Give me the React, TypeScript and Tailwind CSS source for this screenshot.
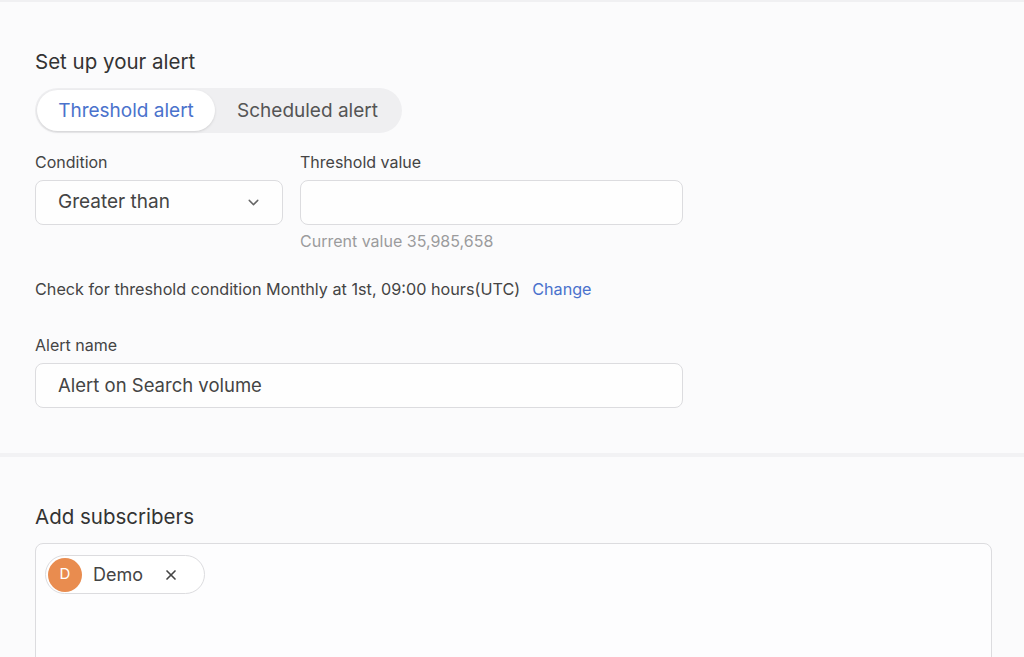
import { ChevronDown, X } from "lucide-react";

export default function App() {
  return (
    <div
      className="h-[657px] w-[1024px] overflow-hidden bg-[#fbfbfc] text-[#3a3a3c]"
      style={{ fontFamily: "Inter, 'Noto Sans', sans-serif" }}
    >
      <div className="h-[2px] bg-[#f0f0f2]" />

      {/* Alert setup */}
      <section className="pl-[35px] pt-[46px] pb-[45px]">
        <h2 className="text-[20.5px] leading-[28px] text-[#333]">Set up your alert</h2>

        <div className="mt-3 flex w-[367px] h-[45px] items-center rounded-full bg-[#efeff1] p-[2px]">
          <button className="h-[41px] w-[178px] rounded-full bg-white pt-[2px] text-[19px] text-[#4a72cc] shadow-sm">
            Threshold alert
          </button>
          <button className="h-[41px] flex-1 rounded-full pt-[2px] text-[19px] text-[#555]">
            Scheduled alert
          </button>
        </div>

        <div className="mt-[19px] flex gap-[17px]">
          <div className="w-[248px]">
            <label className="block text-[16px] leading-[20px] text-[#444]">Condition</label>
            <div className="mt-2 flex h-[45px] items-center justify-between rounded-lg border border-[#dcdcdf] bg-[#fefefe] pl-[22px] pr-[20px]">
              <span className="text-[19px] text-[#444]">Greater than</span>
              <ChevronDown size={17} strokeWidth={2} className="text-[#666]" />
            </div>
          </div>
          <div className="w-[383px]">
            <label className="block text-[16px] leading-[20px] text-[#444]">Threshold value</label>
            <div className="mt-2 h-[45px] rounded-lg border border-[#dcdcdf] bg-[#fefefe]" />
            <p className="mt-[6px] text-[16px] leading-[20px] text-[#9b9b9d]">Current value 35,985,658</p>
          </div>
        </div>

        <p className="mt-[28px] text-[16.2px] leading-[20px] text-[#444]">
          Check for threshold condition Monthly at 1st, 09:00 hours(UTC)
          <span className="ml-[12px] text-[#4a72cc]">Change</span>
        </p>

        <label className="mt-[36px] block text-[16px] leading-[20px] text-[#444]">Alert name</label>
        <div className="mt-2 flex h-[45px] w-[648px] items-center rounded-lg border border-[#dcdcdf] bg-[#fefefe] pl-[22px]">
          <span className="text-[18.5px] text-[#444]">Alert on Search volume</span>
        </div>
      </section>

      <div className="h-[4px] bg-[#f2f2f4]" />

      {/* Subscribers */}
      <section className="pl-[35px] pt-[46px]">
        <h2 className="text-[20.5px] leading-[28px] text-[#333]">Add subscribers</h2>
        <div className="mt-3 h-[160px] w-[957px] rounded-lg border border-[#dcdcdf] bg-[#fdfdfe] pl-[9px] pt-[11px]">
          <div className="flex h-[39px] w-[160px] items-center rounded-full border border-[#dcdcdf] bg-white pl-[2px]">
            <div className="flex h-[34px] w-[34px] items-center justify-center rounded-full bg-[#e98c4f] text-[15px] text-white">
              D
            </div>
            <span className="ml-[11px] text-[18px] text-[#444]">Demo</span>
            <X size={16} strokeWidth={2.5} className="ml-[20px] text-[#444]" />
          </div>
        </div>
      </section>
    </div>
  );
}
